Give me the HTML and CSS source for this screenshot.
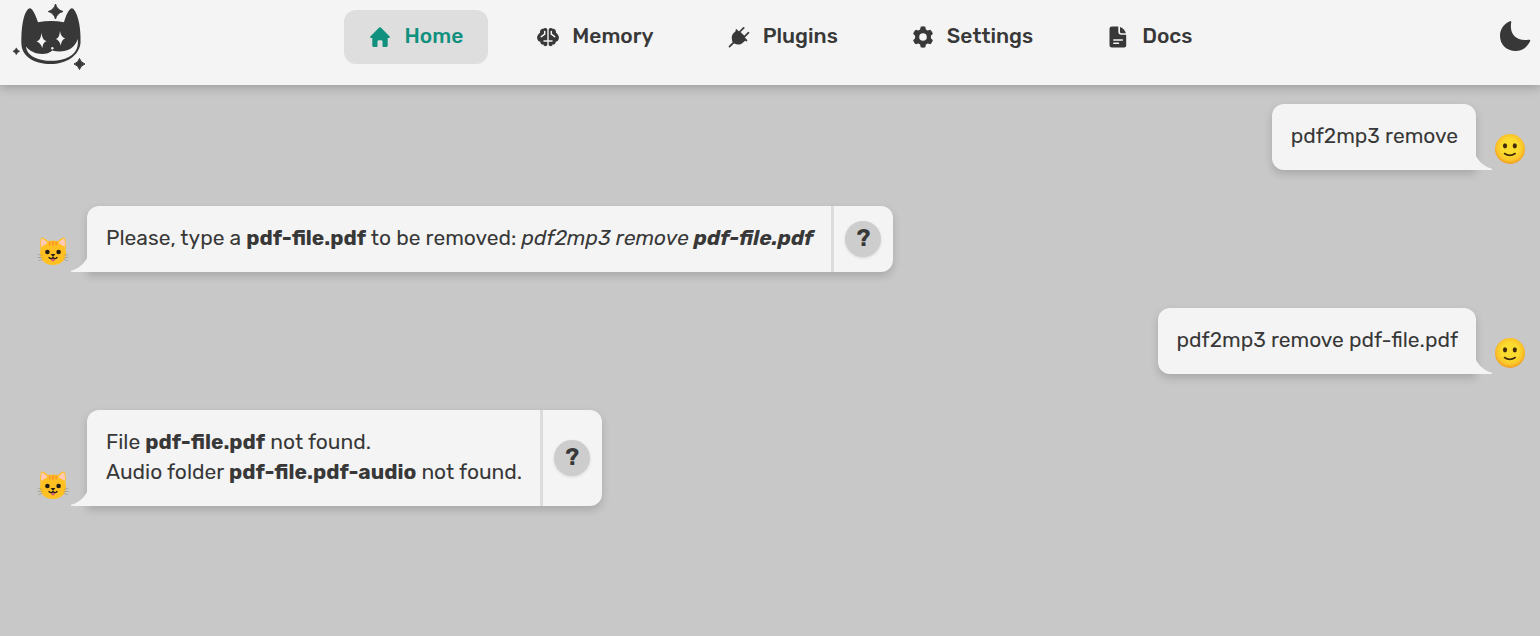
FILE: index.html
```html
<!DOCTYPE html>
<html lang="en">
<head>
<meta charset="utf-8">
<title>Cheshire Cat - Home</title>
<link rel="stylesheet" href="styles.css">
</head>
<body>
<svg class="sprite" aria-hidden="true">
  <defs>
    <radialGradient id="face" cx="50%" cy="45%" r="55%">
      <stop offset="0.5" stop-color="#fbdc2e"/>
      <stop offset="0.8" stop-color="#fac32a"/>
      <stop offset="1" stop-color="#f09a1f"/>
    </radialGradient>
    <symbol id="smile" viewBox="0 0 32 32">
      <circle cx="16" cy="16" r="15" fill="url(#face)"/>
      <ellipse cx="11" cy="12.800" rx="2.100" ry="2.600" fill="#422b0d"/>
      <ellipse cx="20.800" cy="12.800" rx="2.100" ry="2.600" fill="#422b0d"/>
      <path d="M10.500 20.500q5.300 3.800 10.700 0" fill="none" stroke="#422b0d" stroke-width="1.600" stroke-linecap="round"/>
    </symbol>
    <symbol id="cat" viewBox="0 0 32 32">
      <path d="M3.500 15C2.800 9 3.200 4 4.600 2.600 6 2 9 4 11 6.200q5-1.600 10 0C23 4 26 2 27.400 2.600 28.800 4 29.200 9 28.500 15 31 23 25 30 16 30S1 23 3.500 15z" fill="#ffc022"/>
      <path d="M4.200 12C3.800 8 4.100 4.500 5 3.500 7 4.200 9.200 6.200 10.600 8zM27.800 12C28.200 8 27.900 4.500 27 3.500 25 4.200 22.800 6.200 21.400 8z" fill="#ffc9b8"/>
      <path d="M12.800 7.200v2.300M16 7v3M19.200 7.200v2.300" stroke="#ff9a2a" stroke-width="2" stroke-linecap="round"/>
      <circle cx="10.400" cy="17" r="2.300" fill="#211c16"/>
      <circle cx="21.600" cy="17" r="2.300" fill="#211c16"/>
      <path d="M14.300 19.500h3.400L16 21.300z" fill="#211c16" stroke="#211c16" stroke-linejoin="round"/>
      <path d="M14 23.500h4q-.2 3-2 3t-2-3z" fill="#d8587a"/>
      <path d="M12 22.500q2 2.200 4 0 2 2.200 4 0" fill="none" stroke="#211c16" stroke-width="1.300" stroke-linecap="round"/>
      <path d="M.8 19.500l4.400.8M.4 22.500h4.800M1.200 25.800l4.200-1.500M31.200 19.500l-4.400.8M31.600 22.500h-4.800M30.800 25.800l-4.200-1.500" stroke="#a19a8c" stroke-width=".7"/>
    </symbol>
  </defs>
</svg>

<header class="topbar">
  <a class="logo" href="#home" aria-label="Cheshire Cat">
    <svg viewBox="12 3 75 68">
      <g fill="#383838">
        <path d="M21.500 45C21 30 23 13 28.500 8.700Q30 7.500 31.500 9C34 11.500 36.500 17.500 38 22.300Q51 19.800 64 22.300C65.500 17 67.500 11.500 70.500 8.700Q72 7.500 73.500 9C79 15 81 31 80.500 43C79 56 66 64 50.500 64S22.500 57 21.500 45z"/>
        <path d="M55.500 4Q56.900 9.800 63 11.500 56.900 13.200 55.500 19 54.100 13.200 48.300 11.500 54.100 9.800 55.500 4z" stroke="#383838"/>
        <path d="M79.500 58.500Q80.700 62.700 85 64 80.700 65.300 79.500 69.500 78.300 65.300 74 64 78.300 62.700 79.500 58.500z" stroke="#383838"/>
        <path d="M16.300 47.800Q17.200 50.400 19.700 51.300 17.200 52.200 16.300 54.700 15.400 52.200 12.900 51.300 15.400 50.400 16.300 47.800z" stroke="#383838" stroke-width=".5"/>
      </g>
      <g fill="#f4f4f4">
        <path d="M26 46.500C32 54.500 46 56.500 52.300 50.500 62 53 74 51 77.700 39C79 48 75 55 65.500 58.500 56 62 43 61.500 34.500 57.500 29 55 26.500 51 26 46.500z"/>
        <circle cx="52.300" cy="48.300" r="1.200"/>
        <path d="M41.500 33Q42.300 40.300 46.500 41.200 42.800 42.200 42.300 48 40.500 42.500 36.500 41.500 40.800 40.500 41.500 33z"/>
        <path d="M60 31Q61 37.500 65.200 38.200 61.500 39.500 60.800 45.500 59.300 40 55.700 39 59.500 38 60 31z"/>
      </g>
    </svg>
  </a>

  <nav class="menu" aria-label="Main">
    <a class="item active" href="#home">
      <svg class="icon" viewBox="0 0 22 22"><path d="M10.200 1.500Q11 .8 11.800 1.500L20.700 10.400Q21.300 11.700 20 11.900H18.700V19.500Q18.700 21 17.200 21H14.500Q13.500 21 13.500 20V15.500Q13.500 14.200 12.200 14.200H9.800Q8.500 14.200 8.500 15.500V20Q8.500 21 7.500 21H4.800Q3.300 21 3.300 19.500V11.900H2Q.7 11.700 1.300 10.400z"/></svg>
      Home</a>
    <a class="item" href="#memory">
      <svg class="icon" viewBox="0 0 22 22">
        <path d="M10.300 3.500C9.500 1.500 7 1.800 6.300 2.800 4.200 2.500 2.700 4.600 3 6.700 1 8.200-.2 10.200.2 12.500.6 14.700 2 15.800 3.400 15.800 3.200 18 4.800 18.700 6.400 18.500 6.800 20.500 9.500 20.700 10.300 19z"/>
        <path d="M11.700 3.500C12.500 1.500 15 1.800 15.700 2.800 17.800 2.500 19.300 4.600 19 6.700 21 8.200 22.200 10.200 21.800 12.500 21.400 14.700 20 15.800 18.600 15.800 18.800 18 17.200 18.700 15.600 18.500 15.200 20.500 12.500 20.700 11.700 19z"/>
        <path class="cut" d="M7.700 5.500V8.200L4.300 10.600M14.300 5.500V8.200L17.700 10.600M7 15H10.600M15 15H11.400"/>
      </svg>
      Memory</a>
    <a class="item" href="#plugins">
      <svg class="icon" viewBox="0 0 22 22"><path d="M8 4.800Q9 4 10 5L17.500 12.500Q18.300 13.500 17.300 14.500L14.500 17Q12 19.200 8.500 18.300L6.700 17.800 4.400 15.500 3.900 13.500Q3.200 9.500 5.500 7.200z"/><path d="M6 16.200 1.500 20.700M11.500 6 15.700 1.800M16.300 10.800 20.500 6.600M10 5.800 8.300 4M16.500 12.700 18.500 14.500" fill="none" stroke="currentColor" stroke-width="1.700" stroke-linecap="round"/><path d="M8.500 6.500Q10.500 5 12.500 6L16.300 9.800Q17.300 12 15.800 14z"/></svg>
      Plugins</a>
    <a class="item" href="#settings">
      <svg class="icon" viewBox="0 0 22 22"><path fill-rule="evenodd" d="M8.700.8Q11-.1 13.300.8L13.900 3.500 15.600 4.500 18.300 3.700Q20 5.300 20.900 7.800L18.900 9.700V12.300L20.900 14.200Q20 16.700 18.300 18.300L15.600 17.500 13.900 18.500 13.300 21.200Q11 22.100 8.700 21.200L8.100 18.500 6.400 17.500 3.700 18.300Q2 16.700 1.100 14.200L3.100 12.300V9.700L1.100 7.800Q2 5.300 3.700 3.700L6.400 4.500 8.100 3.500zM11 7.200a3.800 3.800 0 1 0 0 7.600 3.800 3.800 0 0 0 0-7.600z"/></svg>
      Settings</a>
    <a class="item" href="#docs">
      <svg class="icon" viewBox="0 0 22 22"><path d="M5 .5h6.300v5.200Q11.300 8.700 14.300 8.700h4.900V19.500q0 2-2 2H5q-2.500 0-2.500-2V2.500q0-2 2.500-2z"/><path d="M13 .9Q17.700 2.500 18.900 7.200H14.500Q13 7.200 13 5.700z"/><path class="cut" d="M6.800 14h8.500M6.800 17.300h4.700"/></svg>
      Docs</a>
  </nav>

  <button class="theme" type="button" aria-label="Dark mode">
    <svg viewBox="0 0 32 32"><path d="M10.500 1.500Q12 .3 12.300 2C10 14 17 21.500 29.500 19.700 31.700 19.500 31.500 20.500 30.800 21.800 28 27.500 23 31 16.500 31 7.500 31 1 24.500 1 16 1 9.500 4.500 4 10.500 1.500z"/></svg>
  </button>
</header>

<main class="chat">
  <div class="row user">
    <div class="bubble"><p class="text">pdf2mp3 remove</p></div>
    <svg class="avatar" role="img" aria-label="You"><use href="#smile"/></svg>
  </div>
  <div class="row bot">
    <svg class="avatar" role="img" aria-label="Cat"><use href="#cat"/></svg>
    <div class="bubble">
      <p class="text">Please, type a <b>pdf-file.pdf</b> to be removed: <i>pdf2mp3 remove <b>pdf-file.pdf</b></i></p>
      <div class="side"><button class="why" type="button">?</button></div>
    </div>
  </div>
  <div class="row user">
    <div class="bubble"><p class="text">pdf2mp3 remove pdf-file.pdf</p></div>
    <svg class="avatar" role="img" aria-label="You"><use href="#smile"/></svg>
  </div>
  <div class="row bot">
    <svg class="avatar" role="img" aria-label="Cat"><use href="#cat"/></svg>
    <div class="bubble">
      <p class="text">File <b>pdf-file.pdf</b> not found.<br>Audio folder <b>pdf-file.pdf-audio</b> not found.</p>
      <div class="side"><button class="why" type="button">?</button></div>
    </div>
  </div>
</main>
</body>
</html>
```
FILE: styles.css
```css
* { box-sizing: border-box; }
body {
  margin: 0;
  min-height: 100vh;
  background: #c8c8c8;
  color: #383838;
  font-family: Rubik, Roboto, "Liberation Sans", sans-serif;
  font-size: 21px;
  line-height: 30px;
}
.sprite { position: absolute; width: 0; height: 0; }
.topbar {
  display: flex;
  justify-content: space-between;
  align-items: flex-start;
  padding: 3px 9px 14px 12px;
  background: #f4f4f4;
  box-shadow: 0 2px 10px rgba(0, 0, 0, 0.25);
}
.logo svg { display: block; width: 75px; height: 68px; }
.menu { display: flex; gap: 24px; padding-top: 7px; }
.item {
  display: flex;
  align-items: center;
  gap: 13px;
  height: 54px;
  padding: 0 25px 2px;
  border-radius: 12px;
  color: inherit;
  font-weight: 500;
  text-decoration: none;
}
.item.active { background: #dedede; color: #10907f; }
.icon { width: 22px; height: 22px; margin-top: 2px; fill: currentColor; }
.cut { fill: none; stroke: #f4f4f4; stroke-width: 1.5; stroke-linecap: round; }
.theme {
  margin-top: 17px;
  padding: 0 0 0 24px;
  border: 0;
  background: none;
}
.theme svg { display: block; width: 32px; height: 32px; fill: #383838; }

.chat {
  display: flex;
  flex-direction: column;
  gap: 36px;
  padding: 19px 14px 36px 37px;
}
.row { display: flex; align-items: flex-end; gap: 18px; }
.user { justify-content: flex-end; }
.avatar { flex: none; width: 32px; height: 32px; margin-bottom: 5px; }
.bubble {
  position: relative;
  display: flex;
  background: #f4f4f4;
  border-radius: 12px;
  box-shadow: 0 4px 8px rgba(0, 0, 0, 0.16);
}
.bot .bubble { border-bottom-left-radius: 0; }
.user .bubble { border-bottom-right-radius: 0; }
.bubble::before {
  content: "";
  position: absolute;
  bottom: 0;
  width: 16px;
  height: 16px;
}
.bot .bubble::before {
  right: 100%;
  background: radial-gradient(circle at -6px -9px, transparent 24px, #f4f4f4 25px);
}
.user .bubble::before {
  left: 100%;
  background: radial-gradient(circle at 22px -9px, transparent 24px, #f4f4f4 25px);
}
.text { margin: 0; padding: 17px 18px 19px 19px; }
.text b { font-weight: 700; }
.side {
  display: flex;
  align-items: center;
  padding: 0 12px 0 11px;
  border-left: 3px solid #dcdcdc;
}
.why {
  width: 36px;
  height: 36px;
  padding: 0 0 2px;
  border: 0;
  border-radius: 50%;
  background: #cdcdcd;
  box-shadow: 0 1px 3px rgba(0, 0, 0, 0.12);
  color: #383838;
  font: inherit;
  font-size: 24px;
  font-weight: 600;
}
```
